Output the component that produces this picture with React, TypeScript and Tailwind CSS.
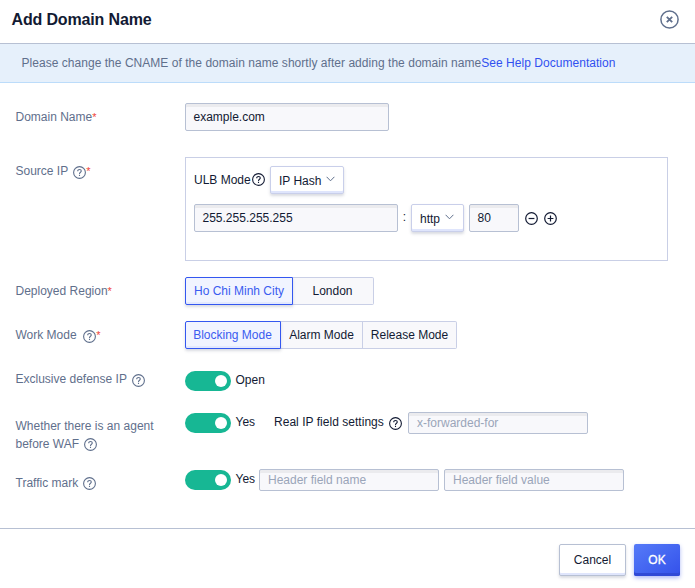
import React from "react";

function Help({ className = "" }: { className?: string }) {
  return (
    <svg className={`h-[13px] w-[13px] shrink-0 ${className}`} viewBox="0 0 13 13" fill="none" stroke="currentColor" strokeWidth="1.1">
      <circle cx="6.5" cy="6.5" r="5.9" />
      <path d="M4.7 5.2C4.7 4.1 5.5 3.5 6.5 3.5S8.3 4.1 8.3 5.1C8.3 6.3 6.5 6.3 6.5 7.9M6.5 8.7V9.9" />
    </svg>
  );
}

function Chevron() {
  return (
    <svg className="h-[6px] w-[9px] shrink-0 text-[#5f6f8c]" viewBox="0 0 9 6" fill="none" stroke="currentColor">
      <path d="M0.6 0.8L4.5 4.8L8.4 0.8" />
    </svg>
  );
}

function RoundIcon({ plus = false }: { plus?: boolean }) {
  return (
    <svg className="h-[13px] w-[13px] shrink-0" viewBox="0 0 13 13" fill="none" stroke="currentColor" strokeWidth="1.2">
      <circle cx="6.5" cy="6.5" r="5.8" />
      <path d={plus ? "M3.6 6.5H9.4M6.5 3.6V9.4" : "M3.6 6.5H9.4"} />
    </svg>
  );
}

function Field({ text, className, muted = false }: { text: string; className: string; muted?: boolean }) {
  return (
    <div
      className={`flex shrink-0 items-center rounded-[2px] border border-[#b7c0d3] bg-[#f8f8fb] shadow-[inset_0_3px_0_#ebebee] ${
        muted ? "pl-2 text-[#9aa5b9]" : "pl-[7.5px]"
      } ${className}`}
    >
      {text}
    </div>
  );
}

function Select({ text, className }: { text: string; className: string }) {
  return (
    <div
      className={`flex h-7 shrink-0 items-center rounded-[2px] border border-[#c9cfea] bg-white pl-2 pt-px shadow-[inset_0_-2px_0_#dfe5fc,0_2px_3px_rgba(80,90,120,0.22)] ${className}`}
    >
      <span>{text}</span>
      <span className="ml-[5px] flex pb-[3px]">
        <Chevron />
      </span>
    </div>
  );
}

function Switch() {
  return (
    <div className="flex h-5 w-[46px] shrink-0 items-center justify-end rounded-full bg-[#17b794] pr-1">
      <div className="h-3 w-3 rounded-full bg-white" />
    </div>
  );
}

function Label({ children, className = "" }: { children: React.ReactNode; className?: string }) {
  return <div className={`w-[170px] shrink-0 pl-[0.5px] leading-[18px] text-[#5f6f8c] ${className}`}>{children}</div>;
}

const Star = () => <span className="text-[11px] text-[#f0453a]">*</span>;

const active =
  "z-10 rounded-l-[2px] border border-[#3457f0] bg-[#f1f4ff] text-[#3a5cf0] shadow-[inset_0_-2px_0_#e3e9fe,0_2px_3px_rgba(80,90,120,0.22)]";
const idle = "border-y border-r border-[#c9cfe6] bg-[#f8f8fb]";

export default function App() {
  return (
    <div className="flex h-[588px] w-[695px] flex-col overflow-hidden whitespace-nowrap bg-white font-['Liberation_Sans',Arial,sans-serif] text-[12px] leading-[18px] text-[#121a33]">
      <header className="flex h-11 shrink-0 items-center justify-between border-b border-[#b7c0d3] pb-1 pl-[11.5px] pr-4">
        <h1 className="text-[16px] font-bold tracking-[-0.15px] text-[#121a33]">Add Domain Name</h1>
        <svg className="h-[19px] w-[19px] text-[#5f6f8c]" viewBox="0 0 19 19" fill="none" stroke="currentColor">
          <circle cx="9.5" cy="9.5" r="8.6" strokeWidth="1.5" />
          <path d="M6.8 6.8L12.2 12.2M12.2 6.8L6.8 12.2" strokeWidth="1.8" />
        </svg>
      </header>

      <div className="flex h-[39px] shrink-0 items-center border-b border-[#bcdcfa] bg-[#e6f0fb] pl-[21.5px] tracking-[0.036px] text-[#5f6f8c]">
        <span>Please change the CNAME of the domain name shortly after adding the domain name</span>
        <a className="text-[#3150f0]">See Help Documentation</a>
      </div>

      <main className="flex h-[445px] shrink-0 flex-col pl-[15px] pt-5">
        <div className="flex h-7">
          <Label className="pt-[5px]">
            Domain Name<Star />
          </Label>
          <Field text="example.com" className="h-7 w-[204px]" />
        </div>

        <div className="mt-[26px] flex h-[104px]">
          <Label className="flex h-7 items-center">
            <span>Source IP</span>
            <Help className="ml-[5px] mt-[2px]" />
            <Star />
          </Label>
          <div className="flex w-[483px] flex-col border border-[#c9cfe6] pl-2 pt-2">
            <div className="flex h-7 items-center">
              <span className="w-[58px] pb-px">ULB Mode</span>
              <Help className="mb-px" />
              <Select text="IP Hash" className="ml-[5px] w-[74px]" />
            </div>
            <div className="mt-[10px] flex h-7 items-center">
              <Field text="255.255.255.255" className="h-7 w-[204px]" />
              <span className="w-[13px] pb-[2px] text-center">:</span>
              <Select text="http" className="w-[53px]" />
              <Field text="80" className="ml-[5px] h-7 w-[50px]" />
              <div className="ml-[6px] flex gap-[6px]">
                <RoundIcon />
                <RoundIcon plus />
              </div>
            </div>
          </div>
        </div>

        <div className="mt-4 flex h-7">
          <Label className="pt-[5px]">
            Deployed Region<Star />
          </Label>
          <div className={`flex w-[108px] items-center justify-center ${active}`}>Ho Chi Minh City</div>
          <div className={`flex w-[81px] items-center justify-center rounded-r-[2px] pr-px ${idle}`}>London</div>
        </div>

        <div className="mt-4 flex h-7">
          <Label className="flex h-7 items-center">
            <span>Work Mode</span>
            <Help className="ml-[6.5px] mt-[2px]" />
            <Star />
          </Label>
          <div className={`flex w-24 items-center justify-center pr-px ${active}`}>Blocking Mode</div>
          <div className={`flex w-[82px] items-center justify-center ${idle}`}>Alarm Mode</div>
          <div className={`flex w-[94px] items-center justify-center rounded-r-[2px] ${idle}`}>Release Mode</div>
        </div>

        <div className="mt-[22px] flex h-5 items-center">
          <Label className="flex items-center pb-[4px]">
            <span>Exclusive defense IP</span>
            <Help className="ml-[5.5px] mt-[2px]" />
          </Label>
          <Switch />
          <span className="ml-[4.5px] pb-[2px]">Open</span>
        </div>

        <div className="mt-[21px] flex h-[42px] items-start">
          <Label className="pt-[5px]">
            <div>Whether there is an agent</div>
            <div className="flex items-center">
              <span>before WAF</span>
              <Help className="ml-[5px]" />
            </div>
          </Label>
          <div className="flex h-[22px] items-center">
            <Switch />
            <span className="ml-[4.5px] w-[38.5px] pb-[2px]">Yes</span>
            <span className="w-[115px] pb-[2px] tracking-[0.03px]">Real IP field settings</span>
            <Help className="mr-[6px]" />
            <Field text="x-forwarded-for" muted className="h-[22px] w-[180px]" />
          </div>
        </div>

        <div className="mt-[15px] flex h-[22px] items-center">
          <Label className="flex items-center pt-[5px]">
            <span>Traffic mark</span>
            <Help className="ml-[5px] mt-px" />
          </Label>
          <Switch />
          <span className="ml-[4.5px] w-[23.5px] pb-[2px]">Yes</span>
          <Field text="Header field name" muted className="h-[22px] w-[180px]" />
          <Field text="Header field value" muted className="ml-[5px] h-[22px] w-[180px]" />
        </div>
      </main>

      <footer className="flex h-[60px] shrink-0 items-start justify-end gap-2 border-t border-[#b7c0d3] pr-[15px] pt-[15px]">
        <button className="h-8 w-[67px] rounded-[2px] border border-[#b7c0d3] bg-white shadow-[inset_0_-2px_0_#dfe5fc,0_2px_3px_rgba(80,90,120,0.22)]">
          Cancel
        </button>
        <button className="h-8 w-[46px] rounded-[2px] bg-linear-to-br from-[#567af8] to-[#3450ea] text-white shadow-[inset_0_-3px_0_#3049d6,0_2px_4px_rgba(52,80,234,0.4)] [-webkit-text-stroke:0.3px_white]">
          OK
        </button>
      </footer>
    </div>
  );
}
